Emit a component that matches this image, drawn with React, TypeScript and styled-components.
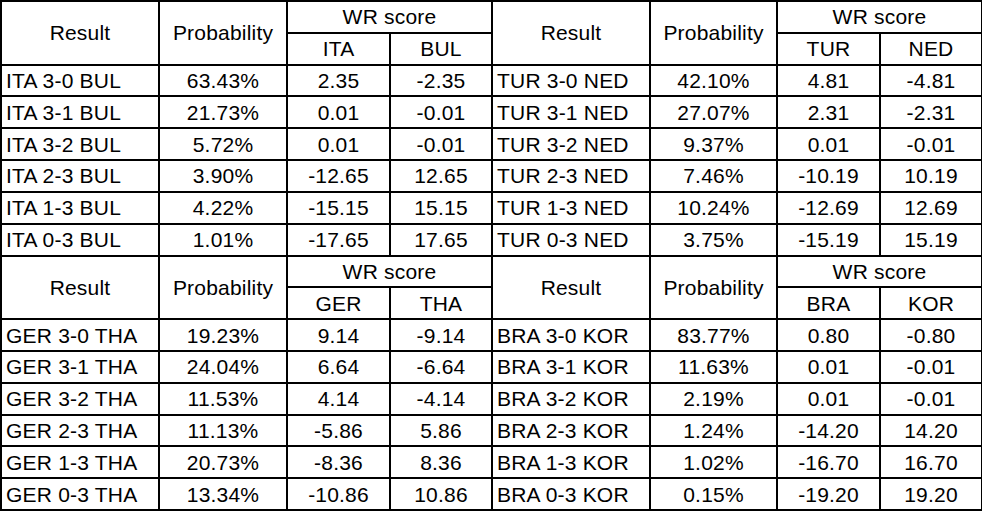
import React from 'react';
import styled, { createGlobalStyle } from 'styled-components';

const GlobalStyle = createGlobalStyle`
  body {
    margin: 0;
    background: #ffffff;
    font-family: "Liberation Sans", Arial, sans-serif;
  }
`;

const ScoreTable = styled.table`
  width: 981px;
  height: 511px;
  border-collapse: collapse;
  table-layout: fixed;
  color: #000000;
  font-size: 21px;
  letter-spacing: 0.2px;
  line-height: 1;
`;

const HeadCell = styled.td`
  border: 2px solid #000000;
  text-align: center;
  vertical-align: middle;
  padding: 0;
  white-space: nowrap;
`;

const ResultCell = styled.td`
  border: 2px solid #000000;
  text-align: left;
  padding: 0 0 0 4px;
  white-space: nowrap;
`;

const ValueCell = styled.td`
  border: 2px solid #000000;
  text-align: center;
  padding: 0;
  white-space: nowrap;
`;

type Match = {
  home: string;
  away: string;
  rows: [string, string, string][];
};

const scores = ['3-0', '3-1', '3-2', '2-3', '1-3', '0-3'];

const blocks: [Match, Match][] = [
  [
    {
      home: 'ITA',
      away: 'BUL',
      rows: [
        ['63.43%', '2.35', '-2.35'],
        ['21.73%', '0.01', '-0.01'],
        ['5.72%', '0.01', '-0.01'],
        ['3.90%', '-12.65', '12.65'],
        ['4.22%', '-15.15', '15.15'],
        ['1.01%', '-17.65', '17.65'],
      ],
    },
    {
      home: 'TUR',
      away: 'NED',
      rows: [
        ['42.10%', '4.81', '-4.81'],
        ['27.07%', '2.31', '-2.31'],
        ['9.37%', '0.01', '-0.01'],
        ['7.46%', '-10.19', '10.19'],
        ['10.24%', '-12.69', '12.69'],
        ['3.75%', '-15.19', '15.19'],
      ],
    },
  ],
  [
    {
      home: 'GER',
      away: 'THA',
      rows: [
        ['19.23%', '9.14', '-9.14'],
        ['24.04%', '6.64', '-6.64'],
        ['11.53%', '4.14', '-4.14'],
        ['11.13%', '-5.86', '5.86'],
        ['20.73%', '-8.36', '8.36'],
        ['13.34%', '-10.86', '10.86'],
      ],
    },
    {
      home: 'BRA',
      away: 'KOR',
      rows: [
        ['83.77%', '0.80', '-0.80'],
        ['11.63%', '0.01', '-0.01'],
        ['2.19%', '0.01', '-0.01'],
        ['1.24%', '-14.20', '14.20'],
        ['1.02%', '-16.70', '16.70'],
        ['0.15%', '-19.20', '19.20'],
      ],
    },
  ],
];

const widths = [158, 128, 103, 102, 158, 127, 103, 102];

const App: React.FC = () => {
  return (
    <>
      <GlobalStyle />
      <ScoreTable>
        <colgroup>
          {widths.map((w, i) => (
            <col key={i} style={{ width: w }} />
          ))}
        </colgroup>
        <tbody>
          {blocks.map(([left, right], b) => (
            <React.Fragment key={b}>
              <tr>
                {[left, right].map((m) => (
                  <React.Fragment key={m.home}>
                    <HeadCell rowSpan={2}>Result</HeadCell>
                    <HeadCell rowSpan={2}>Probability</HeadCell>
                    <HeadCell colSpan={2}>WR score</HeadCell>
                  </React.Fragment>
                ))}
              </tr>
              <tr>
                {[left, right].map((m) => (
                  <React.Fragment key={m.home}>
                    <HeadCell>{m.home}</HeadCell>
                    <HeadCell>{m.away}</HeadCell>
                  </React.Fragment>
                ))}
              </tr>
              {scores.map((s, r) => (
                <tr key={s}>
                  {[left, right].map((m) => (
                    <React.Fragment key={m.home}>
                      <ResultCell>{`${m.home} ${s} ${m.away}`}</ResultCell>
                      <ValueCell>{m.rows[r][0]}</ValueCell>
                      <ValueCell>{m.rows[r][1]}</ValueCell>
                      <ValueCell>{m.rows[r][2]}</ValueCell>
                    </React.Fragment>
                  ))}
                </tr>
              ))}
            </React.Fragment>
          ))}
        </tbody>
      </ScoreTable>
    </>
  );
};

export default App;
